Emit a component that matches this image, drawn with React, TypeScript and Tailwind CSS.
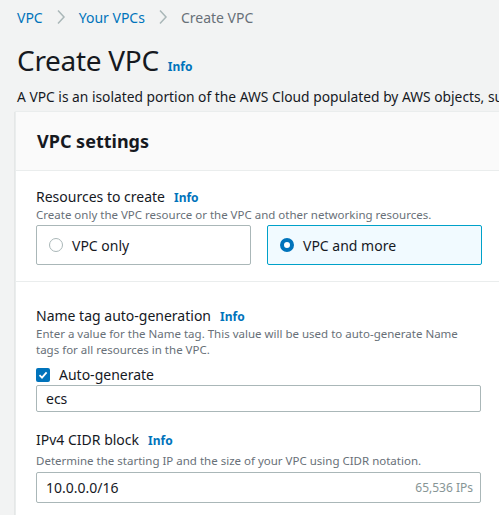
import React, { useState } from "react";

function Info() {
  return <span className="text-[12px] font-bold text-[#0073bb] ml-[9px]">Info</span>;
}

function Chevron() {
  return (
    <svg width="10" height="16" viewBox="0 0 10 16" className="mx-[13px]">
      <path d="M2 1.5 L8 8 L2 14.5" fill="none" stroke="#aab7b8" strokeWidth="1.5" />
    </svg>
  );
}

export default function App() {
  const [mode, setMode] = useState("more");
  const [auto, setAuto] = useState(true);

  const tile = (on: boolean) =>
    on
      ? "h-[40px] flex items-center pl-[12px] border border-[#00a1c9] bg-[#f1faff] rounded-[2px] text-[14px]"
      : "h-[40px] flex items-center pl-[12px] border border-[#aab7b8] bg-white rounded-[2px] text-[14px]";
  const dot = (on: boolean) =>
    on
      ? "w-[14px] h-[14px] rounded-full border-[4px] border-[#0073bb] bg-white mr-[9px]"
      : "w-[14px] h-[14px] rounded-full border border-[#aab7b8] bg-white mr-[9px]";

  return (
    <div
      className="min-h-screen w-[499px] h-[515px] overflow-hidden bg-[#f2f3f3] text-[#16191f]"
      style={{ fontFamily: '"Noto Sans", "Open Sans", sans-serif' }}
    >
      {/* Breadcrumbs */}
      <div className="flex items-center h-[18px] mt-[8px] pl-[17px] text-[14px]">
        <span className="text-[#0073bb]">VPC</span>
        <Chevron />
        <span className="text-[#0073bb]">Your VPCs</span>
        <Chevron />
        <span className="text-[#687078]">Create VPC</span>
      </div>

      {/* Header */}
      <div className="pl-[17px] mt-[17px] flex items-baseline">
        <h1 className="text-[28px] leading-[34px] font-normal tracking-[-0.3px]">Create VPC</h1>
        <Info />
      </div>
      <p className="pl-[17px] mt-[11px] text-[13.8px] leading-[18px] whitespace-nowrap">
        A VPC is an isolated portion of the AWS Cloud populated by AWS objects, such as Amazon EC2 instances.
      </p>

      {/* Card */}
      <div className="ml-[15px] mt-[5px] w-[520px] bg-white border-l border-t border-[#eaeded] shadow-[0_1px_1px_rgba(0,28,36,0.3)]">
        <div className="h-[59px] bg-[#fafafa] border-b border-[#eaeded] flex items-center pl-[21px]">
          <h2 className="text-[18px] font-bold">VPC settings</h2>
        </div>

        <div className="pl-[20px] pr-[38px] pt-[17px] pb-[16px] border-b border-[#eaeded]">
          <div className="flex items-baseline text-[14px] leading-[18px]">
            Resources to create
            <Info />
          </div>
          <div className="text-[11.5px] leading-[16px] text-[#687078]">
            Create only the VPC resource or the VPC and other networking resources.
          </div>
          <div className="grid grid-cols-[215px_215px] gap-[16px] mt-[2px]">
            <button onClick={() => setMode("only")} className={tile(mode === "only")}>
              <span className={dot(mode === "only")} />
              VPC only
            </button>
            <button onClick={() => setMode("more")} className={tile(mode === "more")}>
              <span className={dot(mode === "more")} />
              VPC and more
            </button>
          </div>
        </div>

        <div className="pl-[20px] pr-[38px] pt-[25px] pb-[20px]">
          <div className="flex items-baseline text-[14px] leading-[18px]">
            Name tag auto-generation
            <Info />
          </div>
          <div className="text-[11.5px] leading-[16px] text-[#687078] w-[440px]">
            Enter a value for the Name tag. This value will be used to auto-generate Name tags for all resources in the VPC.
          </div>
          <label
            className="flex items-center mt-[8px] text-[14px] leading-[18px] cursor-pointer"
            onClick={() => setAuto(!auto)}
          >
            <span
              className={
                auto
                  ? "w-[14px] h-[14px] rounded-[2px] bg-[#0073bb] flex items-center justify-center mr-[9px]"
                  : "w-[14px] h-[14px] rounded-[2px] border border-[#aab7b8] bg-white mr-[9px]"
              }
            >
              {auto && (
                <svg width="10" height="10" viewBox="0 0 10 10">
                  <path d="M1.5 5.2 L4 7.6 L8.6 2.4" fill="none" stroke="white" strokeWidth="1.8" />
                </svg>
              )}
            </span>
            Auto-generate
          </label>
          <div className="mt-[1px] h-[27px] w-[445px] border border-[#aab7b8] rounded-[2px] flex items-center pl-[9px] text-[14px]">
            ecs
          </div>

          <div className="flex items-baseline text-[14px] leading-[18px] mt-[19px]">
            IPv4 CIDR block
            <Info />
          </div>
          <div className="text-[11.5px] leading-[16px] text-[#687078] mt-[3px]">
            Determine the starting IP and the size of your VPC using CIDR notation.
          </div>
          <div className="mt-[3px] h-[31px] w-[445px] border border-[#aab7b8] rounded-[2px] flex items-center justify-between pl-[9px] pr-[7px] text-[14px]">
            <span>10.0.0.0/16</span>
            <span className="text-[12px] text-[#879596]">65,536 IPs</span>
          </div>
        </div>
      </div>
    </div>
  );
}
